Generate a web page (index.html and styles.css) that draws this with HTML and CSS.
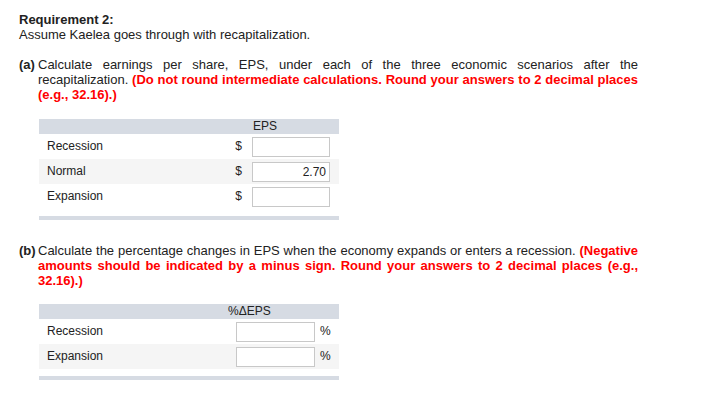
FILE: index.html
```html
<!DOCTYPE html>
<html>
<head>
<meta charset="utf-8">
<link rel="stylesheet" href="styles.css">
</head>
<body>
<div class="page">
  <div class="req">
    <div class="req-title">Requirement 2:</div>
    <div>Assume Kaelea goes through with recapitalization.</div>
  </div>

  <div class="part">
    <div class="part-label">(a)</div>
    <div class="part-text">Calculate earnings per share, EPS, under each of the three economic scenarios after the recapitalization. <span class="red">(Do not round intermediate calculations. Round your answers to 2 decimal places (e.g., 32.16).)</span></div>
  </div>

  <div class="tbl tbl-a">
    <div class="thead">EPS</div>
    <div class="row">
      <div class="label">Recession</div>
      <div class="unit">$</div>
      <div class="box"></div>
    </div>
    <div class="row alt">
      <div class="label">Normal</div>
      <div class="unit">$</div>
      <div class="box">2.70</div>
    </div>
    <div class="row">
      <div class="label">Expansion</div>
      <div class="unit">$</div>
      <div class="box"></div>
    </div>
    <div class="tfoot"></div>
  </div>

  <div class="part part-b">
    <div class="part-label">(b)</div>
    <div class="part-text">Calculate the percentage changes in EPS when the economy expands or enters a recession. <span class="red">(Negative amounts should be indicated by a minus sign. Round your answers to 2 decimal places (e.g., 32.16).)</span></div>
  </div>

  <div class="tbl tbl-b">
    <div class="thead">%ΔEPS</div>
    <div class="row">
      <div class="label">Recession</div>
      <div class="box"></div>
      <div class="pct">%</div>
    </div>
    <div class="row alt">
      <div class="label">Expansion</div>
      <div class="box"></div>
      <div class="pct">%</div>
    </div>
    <div class="tfoot"></div>
  </div>
</div>
</body>
</html>
```

FILE: styles.css
```css
html, body {
  margin: 0;
  padding: 0;
  background: #ffffff;
}
body {
  font-family: "Liberation Sans", Arial, Helvetica, sans-serif;
  font-size: 13px;
  line-height: 15px;
  color: #222222;
}
.page {
  padding: 12px 0 0 19px;
}
.req-title {
  font-weight: bold;
}
.part {
  display: flex;
  width: 619px;
  margin-top: 15px;
}
.part-label {
  width: 19px;
  flex: none;
  font-weight: bold;
}
.part-text {
  flex: 1;
  text-align: justify;
}
.red {
  color: #ff0000;
  font-weight: bold;
}
.tbl {
  width: 300px;
  margin-left: 20px;
  font-size: 12px;
  line-height: 15px;
  color: #222222;
}
.tbl-a {
  margin-top: 17px;
}
.thead {
  height: 15px;
  background: #d6dbe3;
}
.tbl-a .thead {
  padding-left: 214px;
}
.tbl-b .thead {
  padding-left: 189px;
}
.row {
  display: grid;
  height: 25px;
  align-items: center;
  padding: 0 9px 0 8px;
}
.tbl-a .row {
  grid-template-columns: 1fr 20px 78px;
}
.tbl-b .row {
  grid-template-columns: 1fr 79px 15px;
}
.row.alt {
  background: #f5f5f5;
}
.unit {
  text-align: right;
  padding-right: 10px;
}
.pct {
  padding-left: 5px;
}
.box {
  height: 20px;
  box-sizing: border-box;
  border: 1px solid #c8c8c8;
  background: #ffffff;
  text-align: right;
  padding-right: 3px;
  line-height: 18px;
}
.tfoot {
  height: 4px;
  margin-top: 7px;
  background: #d6dbe3;
}
.part-b {
  margin-top: 23px;
}
.tbl-b {
  margin-top: 16px;
}
```
